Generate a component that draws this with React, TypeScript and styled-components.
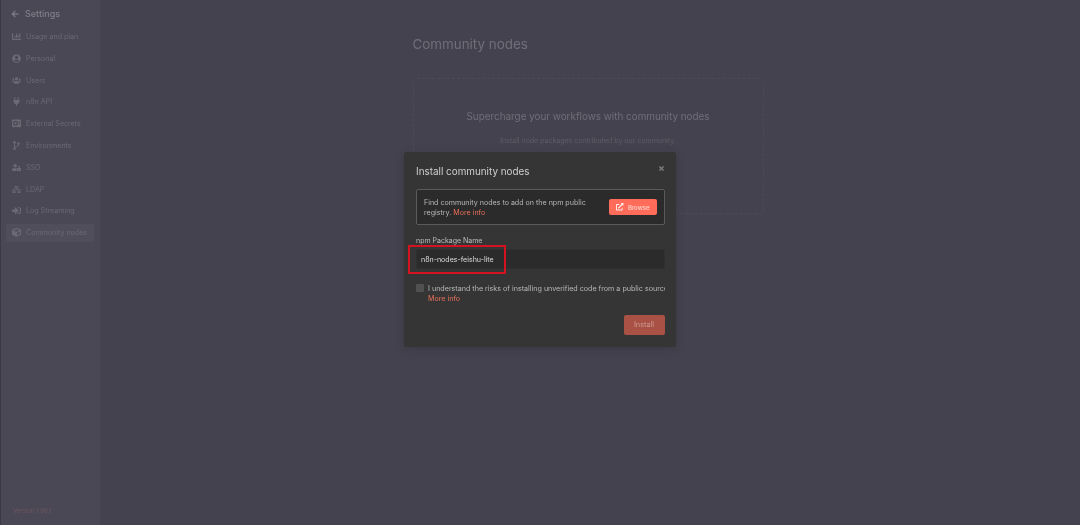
import styled, { createGlobalStyle } from 'styled-components';
import { FaArrowLeft, FaChartBar, FaCodeBranch, FaCube, FaExternalLinkAlt, FaNetworkWired, FaPlug, FaSignInAlt, FaTimes, FaUserCircle, FaUserLock, FaUsers } from 'react-icons/fa';
import { FaVault } from 'react-icons/fa6';

const menuItems = [
  { label: 'Usage and plan', icon: <FaChartBar /> },
  { label: 'Personal', icon: <FaUserCircle /> },
  { label: 'Users', icon: <FaUsers /> },
  { label: 'n8n API', icon: <FaPlug /> },
  { label: 'External Secrets', icon: <FaVault /> },
  { label: 'Environments', icon: <FaCodeBranch /> },
  { label: 'SSO', icon: <FaUserLock /> },
  { label: 'LDAP', icon: <FaNetworkWired /> },
  { label: 'Log Streaming', icon: <FaSignInAlt /> },
  { label: 'Community nodes', icon: <FaCube />, active: true },
];

const App = () => {
  return (
    <>
      <GlobalStyle />
      <Page>
        <Sidebar>
          <SidebarHeader>
            <FaArrowLeft />
            <span>Settings</span>
          </SidebarHeader>
          <Menu>
            {menuItems.map((item) => (
              <MenuItem key={item.label} $active={item.active}>
                <MenuIcon>{item.icon}</MenuIcon>
                <span>{item.label}</span>
              </MenuItem>
            ))}
          </Menu>
          <Version>Version 1.99.1</Version>
        </Sidebar>
        <Content>
          <Title>Community nodes</Title>
          <EmptyCard>
            <h2>Supercharge your workflows with community nodes</h2>
            <p>Install node packages contributed by our community.</p>
          </EmptyCard>
        </Content>
        <Overlay>
          <Dialog>
            <DialogHeader>
              <h3>Install community nodes</h3>
              <FaTimes />
            </DialogHeader>
            <InfoPanel>
              <p>
                Find community nodes to add on the npm public registry. <MoreInfo>More info</MoreInfo>
              </p>
              <BrowseButton>
                <FaExternalLinkAlt />
                Browse
              </BrowseButton>
            </InfoPanel>
            <FieldLabel>npm Package Name</FieldLabel>
            <InputWrapper>
              <PackageInput>n8n-nodes-feishu-lite</PackageInput>
              <Highlight />
            </InputWrapper>
            <RiskRow>
              <Checkbox />
              <RiskText>
                <span>I understand the risks of installing unverified code from a public source.</span>
                <MoreInfo>More info</MoreInfo>
              </RiskText>
            </RiskRow>
            <DialogFooter>
              <InstallButton>Install</InstallButton>
            </DialogFooter>
          </Dialog>
        </Overlay>
      </Page>
    </>
  );
};

const GlobalStyle = createGlobalStyle`
  html, body {
    margin: 0;
    height: 100%;
    background: #44424e;
  }

  body {
    font-family: Inter, 'Liberation Sans', sans-serif;
  }

  * {
    box-sizing: border-box;
  }
`;

const Page = styled.div`
  position: relative;
  display: flex;
  width: 1080px;
  height: 525px;
  overflow: hidden;
  background: #44424e;
  filter: blur(0.35px);
`;

const Sidebar = styled.aside`
  display: flex;
  flex-direction: column;
  width: 101px;
  background: #4a4854;
  border-left: 1px solid #3a3a42;
  border-right: 1px solid #464450;
  padding: 7px 6px 8px 5px;
`;

const SidebarHeader = styled.div`
  display: flex;
  align-items: center;
  gap: 6px;
  height: 13px;
  margin-bottom: 7.5px;
  padding-left: 5px;
  color: #7f7e88;
  font-size: 9px;
  font-weight: 500;

  svg {
    width: 8px;
    height: 8px;
  }
`;

const Menu = styled.nav`
  display: flex;
  flex-direction: column;
  gap: 3.8px;
  flex: 1;
`;

const MenuItem = styled.div<{ $active?: boolean }>`
  display: flex;
  align-items: center;
  height: 18px;
  padding-left: 5px;
  border-radius: 2px;
  color: #6a6974;
  font-size: 7.1px;
  white-space: nowrap;
  background: ${(props) => (props.$active ? '#504e5a' : 'transparent')};
`;

const MenuIcon = styled.span`
  display: flex;
  justify-content: center;
  width: 10px;
  margin-right: 5px;

  svg {
    width: 9px;
    height: 9px;
  }
`;

const Version = styled.div`
  margin-left: 7px;
  margin-bottom: 3px;
  color: #6d5560;
  font-size: 6px;
`;

const Content = styled.main`
  flex: 1;
  padding: 35px 0 0 311.5px;
`;

const Title = styled.h1`
  margin: 0 0 25px;
  color: #6f6e79;
  font-size: 13.4px;
  line-height: 18px;
  font-weight: 400;
`;

const EmptyCard = styled.section`
  display: flex;
  flex-direction: column;
  align-items: center;
  width: 351px;
  height: 136px;
  padding-top: 30px;
  border: 1px dashed #4c4a56;
  border-radius: 4px;

  h2 {
    margin: 0;
    color: #6f6e79;
    font-size: 9.9px;
    line-height: 14px;
    font-weight: 400;
  }

  p {
    margin: 13px 0 0;
    color: #5d5c67;
    font-size: 7px;
    line-height: 10px;
  }
`;

const Overlay = styled.div`
  position: absolute;
  inset: 0;
  display: flex;
  justify-content: center;
  align-items: flex-start;
  padding-top: 152px;
`;

const Dialog = styled.div`
  display: flex;
  flex-direction: column;
  width: 272px;
  height: 195px;
  padding: 12px 11.5px 12px 12px;
  background: #343534;
  border-radius: 3px;
  box-shadow: 0 2px 8px rgba(30, 30, 36, 0.25);
  overflow: hidden;
`;

const DialogHeader = styled.div`
  display: flex;
  justify-content: space-between;
  align-items: flex-start;
  height: 25px;

  h3 {
    margin: 0;
    color: #cfcfd1;
    font-size: 9.9px;
    line-height: 14px;
    font-weight: 400;
  }

  svg {
    width: 7px;
    height: 7px;
    margin: 1px 0 0 0;
    color: #7d7e80;
  }
`;

const InfoPanel = styled.div`
  display: flex;
  align-items: center;
  justify-content: space-between;
  height: 36px;
  padding: 0 7px;
  background: #2a2b2a;
  border: 1px solid #5a5b5c;
  border-radius: 2px;

  p {
    width: 174px;
    margin: 1px 0 0;
    color: #b8b8ba;
    font-size: 7.1px;
    line-height: 10px;
  }
`;

const MoreInfo = styled.span`
  color: #e8705a;
`;

const BrowseButton = styled.div`
  display: flex;
  align-items: center;
  justify-content: center;
  gap: 4px;
  width: 48px;
  height: 16px;
  padding-left: 1px;
  border-radius: 2px;
  background: #ff6d5a;
  color: #ffd4cc;
  font-size: 6.1px;
  font-weight: 500;

  svg {
    width: 7.5px;
    height: 7.5px;
    color: #ffeeea;
  }
`;

const FieldLabel = styled.div`
  margin-top: 11px;
  color: #bebec0;
  font-size: 7px;
  line-height: 10px;
`;

const InputWrapper = styled.div`
  position: relative;
  margin-top: 3px;
`;

const PackageInput = styled.div`
  display: flex;
  align-items: center;
  height: 20px;
  padding-left: 4px;
  background: #2a2b2a;
  border: 1px solid #2f302f;
  border-radius: 2px;
  color: #dcdcdd;
  font-size: 7.05px;
`;

const Highlight = styled.div`
  position: absolute;
  top: -4px;
  left: -8px;
  width: 98px;
  height: 29px;
  border: 2px solid #d3131f;
`;

const RiskRow = styled.div`
  display: flex;
  margin-top: 15px;
`;

const Checkbox = styled.div`
  flex: none;
  width: 8px;
  height: 8px;
  margin-right: 4px;
  background: #505150;
  border-radius: 1px;
`;

const RiskText = styled.div`
  min-width: 0;
  overflow: hidden;
  font-size: 7.15px;
  line-height: 10px;
  white-space: nowrap;
  color: #b8b8ba;

  span {
    display: block;
  }
`;

const DialogFooter = styled.div`
  display: flex;
  justify-content: flex-end;
  margin-top: auto;
  margin-bottom: 0.5px;
`;

const InstallButton = styled.div`
  display: flex;
  align-items: center;
  justify-content: center;
  width: 41px;
  height: 20px;
  border-radius: 2px;
  background: #a85144;
  color: #cf9a90;
  font-size: 7.3px;
`;

export default App;
